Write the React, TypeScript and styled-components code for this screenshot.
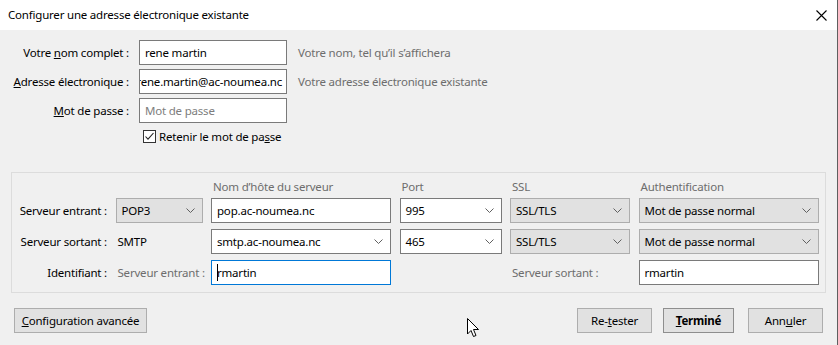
import styled, { createGlobalStyle } from 'styled-components'

const GlobalStyle = createGlobalStyle`
    body {
        margin: 0;
        font-family: "Noto Sans", "Open Sans", sans-serif;
        font-size: 11.5px;
        letter-spacing: -0.2px;
        color: #000;
    }
`

const Window = styled.div`
    position: relative;
    width: 838px;
    height: 345px;
    box-sizing: border-box;
    background: #f0f0f0;
    border-right: 1px solid #5f5f5f;
    display: flex;
    flex-direction: column;
    overflow: hidden;
`

const TitleBar = styled.div`
    height: 30px;
    background: #fff;
    display: flex;
    align-items: center;
    justify-content: space-between;
    padding: 0 10px 0 8px;
    flex-shrink: 0;
`

const Title = styled.span`
    margin-top: -1px;
`

const AccountForm = styled.div`
    display: grid;
    grid-template-columns: 129px 148px auto;
    grid-auto-rows: 25px;
    column-gap: 10px;
    row-gap: 4px;
    padding-top: 10px;
    align-items: center;
`

const Label = styled.label`
    text-align: right;
    white-space: nowrap;
`

const Hint = styled.span`
    color: #6d6d6d;
    padding-left: 1px;
    white-space: nowrap;
`

const TextBox = styled.div<{ $focused?: boolean; $placeholder?: boolean; $alignEnd?: boolean }>`
    box-sizing: border-box;
    height: 25px;
    background: #fff;
    border: 1px solid ${p => (p.$focused ? '#0078d7' : '#7a7a7a')};
    display: flex;
    align-items: center;
    justify-content: ${p => (p.$alignEnd ? 'flex-end' : 'flex-start')};
    padding: 0 4px 0 5px;
    overflow: hidden;
    white-space: nowrap;
    color: ${p => (p.$placeholder ? '#7d7d7d' : '#000')};
`

const Caret = styled.span`
    display: inline-block;
    width: 1px;
    height: 17px;
    background: #000;
    margin-right: -1px;
`

const CheckRow = styled.label`
    grid-column: 2 / 4;
    align-self: start;
    display: flex;
    align-items: center;
    gap: 3px;
    padding-left: 4px;
    height: 16px;
    margin-top: 1px;
`

const CheckBox = styled.span`
    box-sizing: border-box;
    width: 13px;
    height: 13px;
    border: 1px solid #333;
    background: #fff;
    display: flex;
    align-items: center;
    justify-content: center;
`

const ServerBox = styled.div`
    margin: 20px 11px 0 11px;
    border: 1px solid #dcdcdc;
    padding: 6px 0 7px 0;
    display: grid;
    grid-template-columns: 95px 87px 180px 102px 120px 180px;
    grid-template-rows: 13px 25px 25px 25px;
    column-gap: 8.5px;
    row-gap: 6px;
    align-items: center;
`

const ColHeader = styled.span<{ $col: number }>`
    grid-column: ${p => p.$col};
    color: #6d6d6d;
    padding-left: 2px;
    align-self: start;
    white-space: nowrap;
    line-height: 16px;
`

const RowLabel = styled.span`
    grid-column: 1;
    text-align: right;
    white-space: nowrap;
`

const PlainText = styled.span<{ $muted?: boolean }>`
    color: ${p => (p.$muted ? '#6d6d6d' : '#000')};
    padding-left: 2px;
    white-space: nowrap;
`

const Select = styled.div<{ $editable?: boolean }>`
    box-sizing: border-box;
    height: 25px;
    background: ${p => (p.$editable ? '#fff' : '#e1e1e1')};
    border: 1px solid ${p => (p.$editable ? '#7a7a7a' : '#adadad')};
    display: flex;
    align-items: center;
    justify-content: space-between;
    padding: 0 7px 0 5px;
    white-space: nowrap;
`

const Footer = styled.div`
    display: flex;
    align-items: center;
    padding: 15px 14px 0 14px;
    gap: 11px;
`

const Button = styled.button<{ $primary?: boolean; $width: number }>`
    box-sizing: border-box;
    width: ${p => p.$width}px;
    height: 25px;
    background: #e1e1e1;
    border: 1px solid ${p => (p.$primary ? '#8e8e8e' : '#adadad')};
    font-family: inherit;
    font-size: inherit;
    letter-spacing: inherit;
    font-weight: ${p => (p.$primary ? 700 : 400)};
    color: #000;
    padding: 0;
`

const Spacer = styled.div`
    flex: 1;
`

const Cursor = styled.svg`
    position: absolute;
    left: 467px;
    top: 318px;
`

const Chevron = () => (
    <svg width="9" height="5" viewBox="0 0 9 5">
        <path d="M0.5 0.5 L4.5 4.5 L8.5 0.5" fill="none" stroke="#606060" strokeWidth="1" />
    </svg>
)

const CloseIcon = () => (
    <svg width="11" height="11" viewBox="0 0 11 11">
        <path d="M0.5 0.5 L10.5 10.5 M10.5 0.5 L0.5 10.5" stroke="#000" strokeWidth="1.1" />
    </svg>
)

const App = () => {
    return (
        <Window>
            <GlobalStyle />
            <TitleBar>
                <Title>Configurer une adresse électronique existante</Title>
                <CloseIcon />
            </TitleBar>

            <AccountForm>
                <Label>Votre <u>n</u>om complet :</Label>
                <TextBox>rene martin</TextBox>
                <Hint>Votre nom, tel qu’il s’affichera</Hint>

                <Label><u>A</u>dresse électronique :</Label>
                <TextBox $alignEnd>rene.martin@ac-noumea.nc</TextBox>
                <Hint>Votre adresse électronique existante</Hint>

                <Label><u>M</u>ot de passe :</Label>
                <TextBox $placeholder>Mot de passe</TextBox>
                <span />

                <span />
                <CheckRow>
                    <CheckBox>
                        <svg width="11" height="11" viewBox="0 0 11 11">
                            <path d="M1.5 5.5 L4 8.2 L9.5 2" fill="none" stroke="#222" strokeWidth="1.1" />
                        </svg>
                    </CheckBox>
                    <span>Retenir le mot de pa<u>s</u>se</span>
                </CheckRow>
            </AccountForm>

            <ServerBox>
                <ColHeader $col={3}>Nom d’hôte du serveur</ColHeader>
                <ColHeader $col={4}>Port</ColHeader>
                <ColHeader $col={5}>SSL</ColHeader>
                <ColHeader $col={6}>Authentification</ColHeader>

                <RowLabel>Serveur entrant :</RowLabel>
                <Select>POP3<Chevron /></Select>
                <TextBox>pop.ac-noumea.nc</TextBox>
                <Select $editable>995<Chevron /></Select>
                <Select>SSL/TLS<Chevron /></Select>
                <Select>Mot de passe normal<Chevron /></Select>

                <RowLabel>Serveur sortant :</RowLabel>
                <PlainText>SMTP</PlainText>
                <Select $editable>smtp.ac-noumea.nc<Chevron /></Select>
                <Select $editable>465<Chevron /></Select>
                <Select>SSL/TLS<Chevron /></Select>
                <Select>Mot de passe normal<Chevron /></Select>

                <RowLabel>Identifiant :</RowLabel>
                <PlainText $muted>Serveur entrant :</PlainText>
                <TextBox $focused><Caret />rmartin</TextBox>
                <span />
                <PlainText $muted>Serveur sortant :</PlainText>
                <TextBox>rmartin</TextBox>
            </ServerBox>

            <Footer>
                <Button $width={133}><u>C</u>onfiguration avancée</Button>
                <Spacer />
                <Button $width={75}>Re-<u>t</u>ester</Button>
                <Button $width={71} $primary><u>T</u>erminé</Button>
                <Button $width={75} style={{ marginLeft: 3 }}>Ann<u>u</u>ler</Button>
            </Footer>

            <Cursor width="13" height="20" viewBox="0 0 13 20">
                <path d="M0.5 0.5 L0.5 16 L4 12.5 L6.5 18.5 L9 17.5 L6.5 11.5 L11.5 11.5 Z" fill="#fff" stroke="#000" strokeWidth="1" />
            </Cursor>
        </Window>
    )
}

export default App
